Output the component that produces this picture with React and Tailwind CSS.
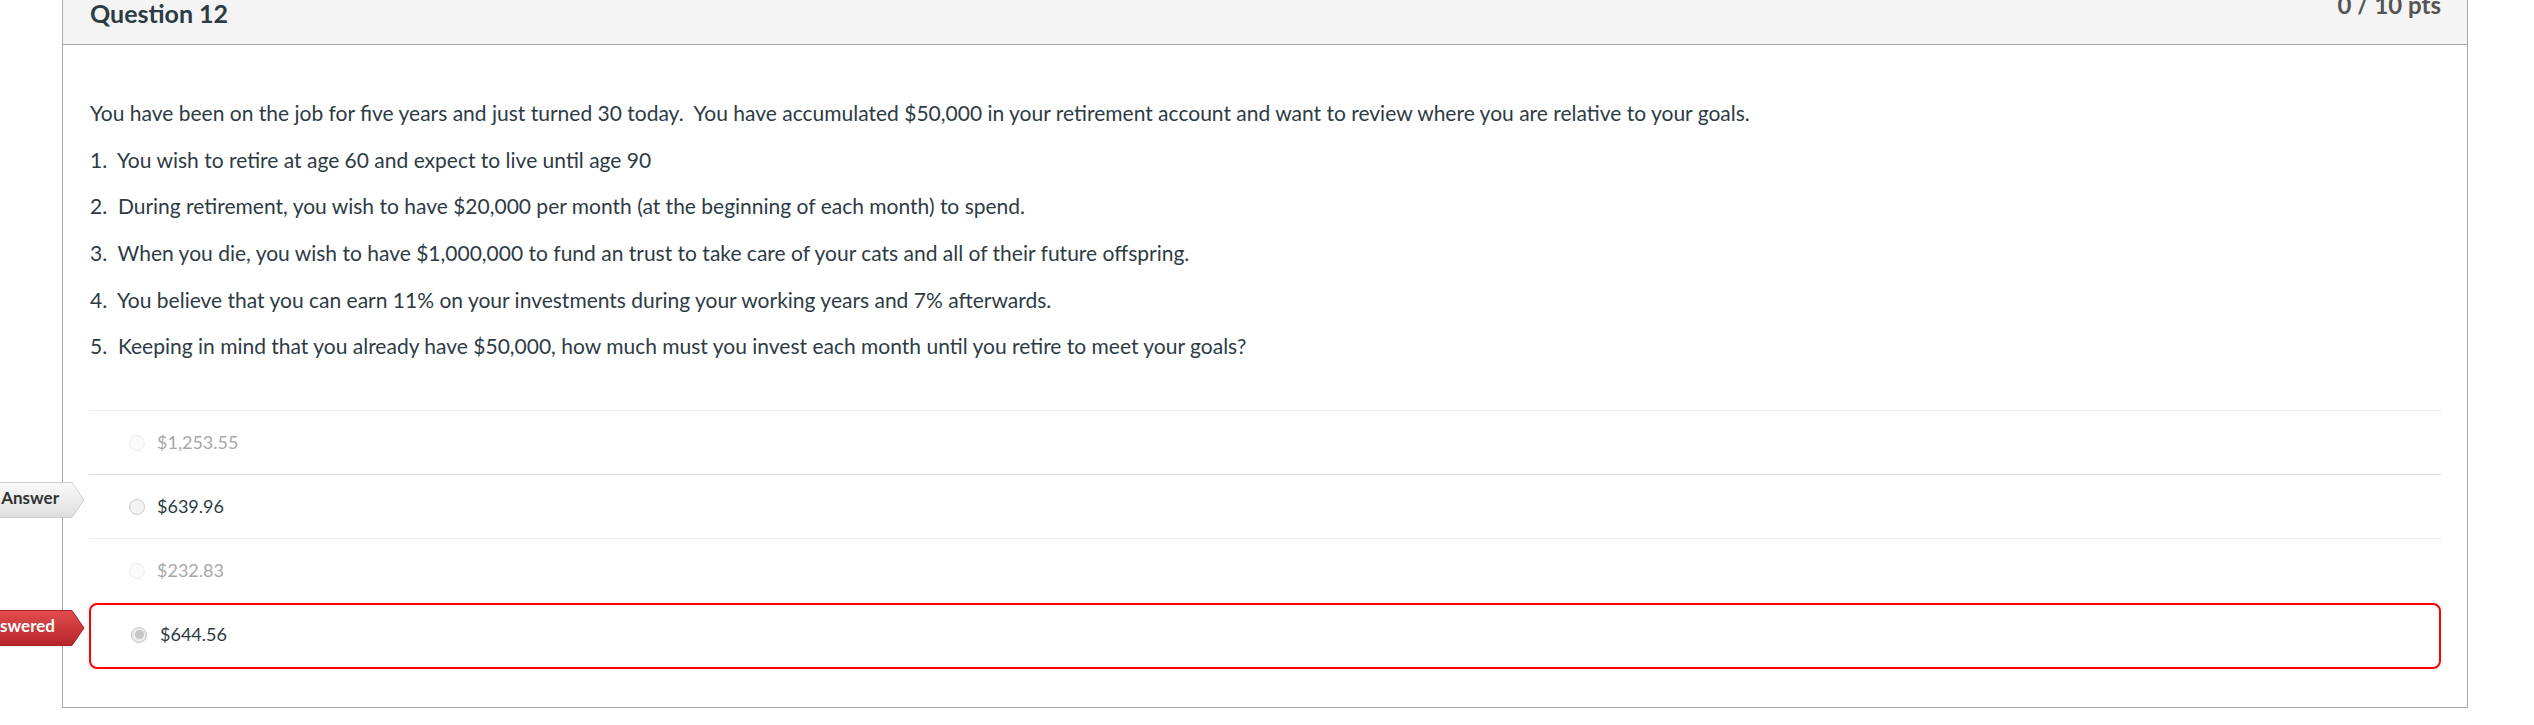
import React from "react";

const FONT = { fontFamily: "Lato, 'Noto Sans', 'Liberation Sans', sans-serif" };

function Radio({ state }) {
  if (state === "checked") {
    return (
      <span className="flex h-[16px] w-[16px] shrink-0 items-center justify-center rounded-full border border-[#c4c4c4] bg-[#ececec]">
        <span className="h-[9px] w-[9px] rounded-full bg-[#c6c6c6]" />
      </span>
    );
  }
  if (state === "faint") {
    return <span className="h-[16px] w-[16px] shrink-0 rounded-full border border-[#ececec] bg-[#fbfbfb]" />;
  }
  return <span className="h-[16px] w-[16px] shrink-0 rounded-full border border-[#cfcfcf] bg-[#f3f3f3]" />;
}

function Arrow({ top, kind, label, textRight }) {
  const gray = kind === "gray";
  return (
    <div className="absolute left-0 h-[36px] w-[86px]" style={{ top }}>
      <svg className="absolute inset-0" width="86" height="36" viewBox="0 0 86 36">
        <defs>
          <linearGradient id="g-gray" x1="0" y1="0" x2="0" y2="1">
            <stop offset="0" stopColor="#fbfbfb" />
            <stop offset="1" stopColor="#dedede" />
          </linearGradient>
          <linearGradient id="g-red" x1="0" y1="0" x2="0" y2="1">
            <stop offset="0" stopColor="#e24d4d" />
            <stop offset="1" stopColor="#b3242a" />
          </linearGradient>
        </defs>
        <polygon
          points="-10,0.5 72,0.5 84,18 72,35.5 -10,35.5"
          fill={gray ? "url(#g-gray)" : "url(#g-red)"}
          stroke={gray ? "#cdcdcd" : "#a82226"}
          strokeWidth="1"
        />
      </svg>
      <div
        className={`absolute inset-y-0 right-0 flex items-center justify-end whitespace-nowrap pb-[4px] text-[17px] font-bold ${
          gray ? "text-[#333333]" : "text-white"
        }`}
        style={{ paddingRight: textRight }}
      >
        {label}
      </div>
    </div>
  );
}

export default function App() {
  const lines = [
    "You have been on the job for five years and just turned 30 today.\u00a0 You have accumulated $50,000 in your retirement account and want to review where you are relative to your goals.",
    "1.\u00a0 You wish to retire at age 60 and expect to live until age 90",
    "2.\u00a0 During retirement, you wish to have $20,000 per month (at the beginning of each month) to spend.",
    "3.\u00a0 When you die, you wish to have $1,000,000 to fund an trust to take care of your cats and all of their future offspring.",
    "4.\u00a0 You believe that you can earn 11% on your investments during your working years and 7% afterwards.",
    "5.\u00a0 Keeping in mind that you already have $50,000, how much must you invest each month until you retire to meet your goals?",
  ];

  return (
    <div className="relative h-[725px] w-full overflow-hidden bg-white" style={FONT}>
      <div className="ml-[62px] mt-[-20px] w-[2406px] border border-[#ababab]">
        <div className="flex h-[64px] items-start justify-between border-b border-[#ababab] bg-[#f4f4f4] pl-[27px] pr-[26px]">
          <div className="mt-[17px] text-[25px] font-bold leading-[30px] text-[#2d3b45]">Question 12</div>
          <div className="mt-[9px] text-[24px] font-bold leading-[30px] text-[#555555]">0 / 10 pts</div>
        </div>

        <div className="pl-[26px] pr-[26px] pt-[53px] pb-[38px]">
          <div className="flex flex-col gap-[16.7px] pl-[1px] text-[21px] leading-[30px] text-[#2d3b45]">
            {lines.map((t, i) => (
              <p key={i}>{t}</p>
            ))}
          </div>

          <div className="mt-[49px] flex flex-col text-[18px]">
            <div className="flex h-[64px] items-center gap-[12px] border-t border-[#ebebeb] pl-[40px]">
              <Radio state="faint" />
              <span className="text-[#a8a8a8]">$1,253.55</span>
            </div>
            <div className="flex h-[64px] items-center gap-[12px] border-t border-[#dcdcdc] pl-[40px]">
              <Radio state="normal" />
              <span className="text-[#2d3b45]">$639.96</span>
            </div>
            <div className="flex h-[64px] items-center gap-[12px] border-t border-[#ebebeb] pl-[40px]">
              <Radio state="faint" />
              <span className="text-[#a8a8a8]">$232.83</span>
            </div>
            <div className="mt-[1px] flex h-[66px] items-center gap-[13px] rounded-[8px] border-2 border-[#ff0000] pb-[3px] pl-[40px]">
              <Radio state="checked" />
              <span className="text-[#2d3b45]">$644.56</span>
            </div>
          </div>
        </div>
      </div>

      <Arrow top={482} kind="gray" label="Correct Answer" textRight={27} />
      <Arrow top={610} kind="red" label="You Answered" textRight={31} />
    </div>
  );
}
